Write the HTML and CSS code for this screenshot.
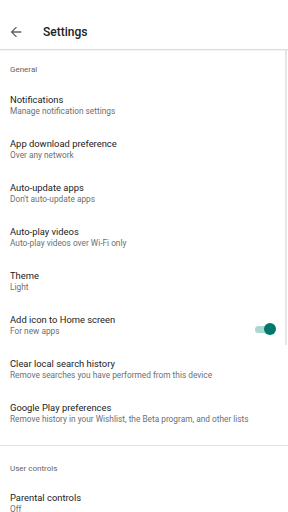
FILE: index.html
```html
<!DOCTYPE html>
<html>
<head>
<meta charset="utf-8">
<link rel="stylesheet" href="styles.css">
</head>
<body>
<div class="app">
  <header class="topbar">
    <svg class="back" viewBox="0 0 24 24" width="16" height="16"><path d="M20 11H7.83l5.59-5.59L12 4l-8 8 8 8 1.41-1.41L7.83 13H20v-2z" fill="#5f6368"/></svg>
    <div class="title">Settings</div>
  </header>
  <main class="content">
    <section class="group">
      <div class="label">General</div>
      <div class="item"><div class="txt"><div class="t">Notifications</div><div class="s">Manage notification settings</div></div></div>
      <div class="item"><div class="txt"><div class="t">App download preference</div><div class="s">Over any network</div></div></div>
      <div class="item"><div class="txt"><div class="t">Auto-update apps</div><div class="s">Don't auto-update apps</div></div></div>
      <div class="item"><div class="txt"><div class="t">Auto-play videos</div><div class="s">Auto-play videos over Wi-Fi only</div></div></div>
      <div class="item"><div class="txt"><div class="t">Theme</div><div class="s">Light</div></div></div>
      <div class="item"><div class="txt"><div class="t">Add icon to Home screen</div><div class="s">For new apps</div></div><div class="toggle"><span class="track"></span><span class="thumb"></span></div></div>
      <div class="item"><div class="txt"><div class="t">Clear local search history</div><div class="s">Remove searches you have performed from this device</div></div></div>
      <div class="item"><div class="txt"><div class="t">Google Play preferences</div><div class="s">Remove history in your Wishlist, the Beta program, and other lists</div></div></div>
    </section>
    <section class="group second">
      <div class="label">User controls</div>
      <div class="item"><div class="txt"><div class="t">Parental controls</div><div class="s">Off</div></div></div>
    </section>
  </main>
  <div class="scrollbar"></div>
</div>
</body>
</html>
```
FILE: styles.css
```css
html, body {
  margin: 0;
  padding: 0;
  background: #ffffff;
}
body {
  font-family: Roboto, "Noto Sans", sans-serif;
  color: #202124;
  width: 288px;
  height: 512px;
  overflow: hidden;
}
.app {
  position: relative;
  height: 512px;
  overflow: hidden;
}
.topbar {
  height: 50px;
  box-sizing: border-box;
  padding-top: 14px;
  border-bottom: 1px solid #dadce0;
  box-shadow: 0 1px 1px rgba(0,0,0,0.04);
  display: flex;
  align-items: center;
}
.back {
  margin-left: 8px;
  flex: none;
}
.title {
  margin-left: 19px;
  font-size: 12px;
  font-weight: 500;
  color: #202124;
}
.group {
  padding-bottom: 9px;
  border-bottom: 1px solid #e3e3e3;
}
.second {
  border-bottom: none;
}
.label {
  font-size: 8px;
  line-height: 10px;
  color: #5f6368;
  padding: 15px 10px 9px;
}
.second .label {
  padding: 18px 10px 8px;
}
.item {
  height: 44px;
  box-sizing: border-box;
  padding: 9px 12px 0 10px;
  display: flex;
  align-items: flex-start;
}
.txt {
  flex: 1;
  min-width: 0;
}
.t {
  font-size: 9.4px;
  line-height: 13px;
  color: #202124;
  white-space: nowrap;
}
.s {
  font-size: 8.3px;
  line-height: 11px;
  color: #6b6f73;
  white-space: nowrap;
}
.toggle {
  position: relative;
  width: 21px;
  height: 12px;
  margin-top: 10px;
  flex: none;
}
.track {
  position: absolute;
  left: 0;
  top: 2.5px;
  width: 19px;
  height: 7px;
  border-radius: 4px;
  background: #a8d8d0;
}
.thumb {
  position: absolute;
  right: 0;
  top: 0;
  width: 12px;
  height: 12px;
  border-radius: 50%;
  background: #00796b;
}
.scrollbar {
  position: absolute;
  right: 1px;
  top: 50px;
  width: 2px;
  height: 295px;
  background: #e6e6e6;
}
```
